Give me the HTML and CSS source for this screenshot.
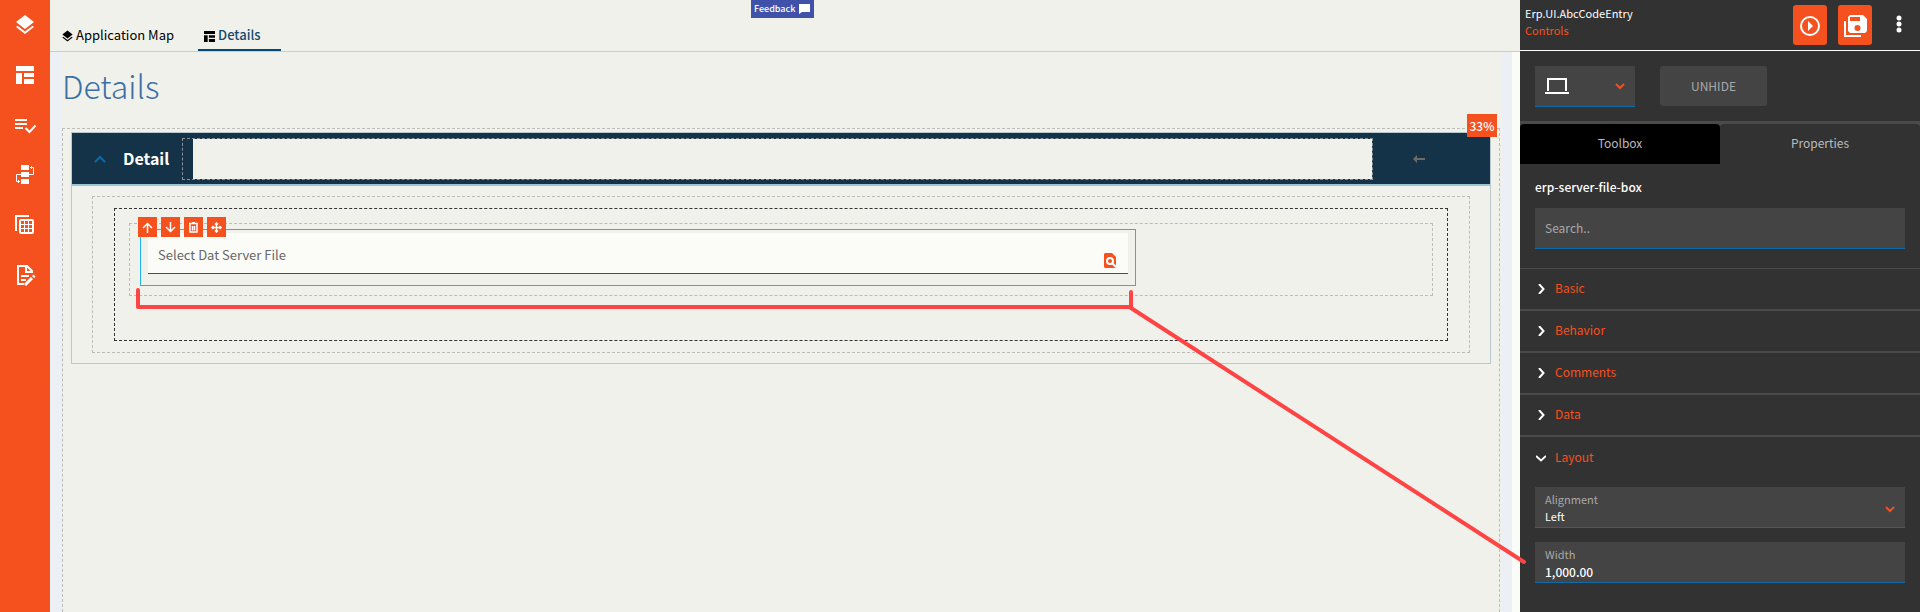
FILE: index.html
```html
<!DOCTYPE html>
<html lang="en">
<head>
  <meta charset="UTF-8">
  <meta name="viewport" content="width=device-width, initial-scale=1.0">
  <title>Erp.UI.AbcCodeEntry</title>
  <link rel="stylesheet" href="styles.css">
</head>
<body>
  <div class="app">
    <nav class="sidebar">
      <button aria-label="Layers">
        <svg width="24" height="24" viewBox="0 0 24 24" fill="#fff"><path d="M12 18.5L4.6 12.8 3 14l9 7 9-7-1.6-1.2zM12 16l7.4-5.7L21 9l-9-7-9 7 1.6 1.3z"/></svg>
      </button>
      <button aria-label="Page layout">
        <svg width="24" height="24" viewBox="0 0 24 24" fill="#fff"><path d="M3 3h18v5H3zM3 10h6v11H3zM11 10h10v4H11zM11 16h10v5H11z"/></svg>
      </button>
      <button aria-label="Rules">
        <svg width="24" height="24" viewBox="0 0 24 24" fill="#fff"><path d="M2 6h12v2H2zM2 10h12v2H2zM2 14h8v2H2z"/><path d="M12.500 15l4 4 6-6.500" fill="none" stroke="#fff" stroke-width="2"/></svg>
      </button>
      <button aria-label="Events">
        <svg width="24" height="24" viewBox="0 0 24 24" fill="#fff"><path d="M8 2h8v5H8zM8 9h8v5H8zM8 16h8v5H8z"/><path d="M8 11.500H3.500v7H7M5.500 17v3M16 11.500h4.500v-7H17M18.500 3v3" fill="none" stroke="#fff"/></svg>
      </button>
      <button aria-label="Data views">
        <svg width="24" height="24" viewBox="0 0 24 24" fill="none" stroke="#fff"><path d="M16 3H3v15" stroke-width="2"/><rect x="7" y="7" width="13" height="13" rx="1" stroke-width="2"/><path d="M7 11.500h13M7 15.500h13M11.500 7v13M15.500 7v13"/></svg>
      </button>
      <button aria-label="Edit document">
        <svg width="24" height="24" viewBox="0 0 24 24" fill="none" stroke="#fff" stroke-width="2"><path d="M11 21H5V3h9l5 5v2"/><path d="M13 3v6h6M8 13h8M8 17h5"/><path d="M12 22l7-7" stroke-width="3"/><path d="M20 14l1.500-1.500" stroke-width="3"/></svg>
      </button>
    </nav>

    <main class="main">
      <header class="tabs">
        <a class="tab" href="#map">
          <svg width="11" height="12" viewBox="3 1 18 21"><path d="M12 18.500L4.600 12.800 3 14l9 7 9-7-1.600-1.200zM12 16l9-7-9-7-9 7z"/></svg>Application Map</a>
        <a class="tab active" href="#details">
          <svg width="11" height="11" viewBox="3 3 18 18"><path d="M3 3h18v5H3zM3 10h6v11H3zM11 10h10v4H11zM11 16h10v5H11z"/></svg>Details</a>
        <button class="feedback">Feedback
          <svg width="12" height="12" viewBox="0 0 12 12" fill="#fff"><path d="M0 1h11v8H3l-3 2z"/></svg>
        </button>
      </header>

      <div class="workspace">
        <section class="page">
          <h1>Details</h1>
          <div class="drop-zone">
            <span class="badge">33%</span>
            <section class="panel">
              <div class="panel-header">
                <button class="collapse" aria-label="Collapse">
                  <svg width="12" height="8" viewBox="0 0 12 8" fill="none" stroke="#0f6ba8" stroke-width="2"><path d="M1 7l5-5 5 5"/></svg>
                </button>
                <h2>Detail</h2>
                <div class="toolbar-slot"><div class="slot-fill"></div></div>
                <button class="back" aria-label="Back">
                  <svg width="12" height="8" viewBox="0 0 12 8"><path d="M0 4l4-4v8zM3 3h9v2H3z" fill="#6e6a68"/></svg>
                </button>
              </div>
              <div class="panel-body">
                <div class="box outer">
                  <div class="box row">
                    <div class="box column">
                      <div class="control">
                        <div class="actions">
                          <button aria-label="Move up"><svg width="11" height="11" viewBox="0 0 11 11"><path d="M5.500 11V2M1 6l4.500-4.500L10 6"/></svg></button>
                          <button aria-label="Move down"><svg width="11" height="11" viewBox="0 0 11 11"><path d="M5.500 0v9M1 5l4.500 4.500L10 5"/></svg></button>
                          <button aria-label="Delete"><svg width="11" height="11" viewBox="0 0 11 11"><path d="M1 1.500h9M2 2v8h7V2M4.500 4v4.500M6.500 4v4.500M4 .5h3"/></svg></button>
                          <button aria-label="Move"><svg width="11" height="11" viewBox="0 0 11 11"><path d="M5.500 1v9M1 5.500h9M4 2.500l1.500-1.500 1.500 1.500M4 8.500l1.500 1.500 1.500-1.500M2.500 4L1 5.500 2.500 7M8.500 4L10 5.500 8.500 7"/></svg></button>
                        </div>
                        <div class="file-field">
                          <input type="text" placeholder="Select Dat Server File" aria-label="Select Dat Server File">
                          <button aria-label="Browse files">
                            <svg width="13" height="15" viewBox="0 0 13 15"><path d="M1 0h7l4 4v10l-1 1H1l-1-1V1z" fill="#f4511e"/><circle cx="6" cy="8" r="3" fill="none" stroke="#fff" stroke-width="2"/><path d="M8 10l4 4" stroke="#fff" stroke-width="2"/></svg>
                          </button>
                        </div>
                      </div>
                    </div>
                  </div>
                </div>
              </div>
            </section>
          </div>
        </section>
      </div>
    </main>

    <aside class="inspector">
      <header class="inspector-header">
        <div class="names">
          <strong>Erp.UI.AbcCodeEntry</strong>
          <span>Controls</span>
        </div>
        <button class="action" aria-label="Preview">
          <svg width="24" height="24" viewBox="0 0 24 24"><circle cx="12" cy="13" r="9" fill="none" stroke="#fff" stroke-width="2"/><path d="M10 8v10l5-5z" fill="#fff"/></svg>
        </button>
        <button class="action" aria-label="Save">
          <svg width="24" height="24" viewBox="0 0 24 24"><path d="M2 8v15h16" fill="none" stroke="#fff" stroke-width="2"/><path fill="#fff" fill-rule="evenodd" d="M7 2h13l4 4v12l-2 2H7l-2-2V4zM7 4v4h10V4zM14.500 12a3 3 0 1 0 0 6 3 3 0 1 0 0-6z"/></svg>
        </button>
        <button class="more" aria-label="More">
          <svg width="6" height="18" viewBox="0 0 6 18" fill="#fff"><circle cx="3" cy="3" r="2.500"/><circle cx="3" cy="9" r="2.500"/><circle cx="3" cy="15" r="2.500"/></svg>
        </button>
      </header>

      <div class="device-bar">
        <button class="device" aria-label="Device">
          <svg width="24" height="16" viewBox="0 0 24 16"><path d="M3 13V1h18v12" fill="none" stroke="#fff" stroke-width="2"/><path d="M0 14h24v2H0z" fill="#fff"/></svg>
          <svg class="arrow" width="10" height="7" viewBox="0 0 10 7"><path d="M1 1l4 4 4-4"/></svg>
        </button>
        <button class="unhide">UNHIDE</button>
      </div>

      <div class="inspector-tabs">
        <button class="active">Toolbox</button>
        <button>Properties</button>
      </div>

      <div class="search">
        <label for="search">erp-server-file-box</label>
        <input type="text" id="search" placeholder="Search..">
      </div>

      <div class="groups">
        <button class="group"><svg width="10" height="10" viewBox="0 0 10 10"><path d="M3 0l4.500 5L3 10"/></svg>Basic</button>
        <button class="group"><svg width="10" height="10" viewBox="0 0 10 10"><path d="M3 0l4.500 5L3 10"/></svg>Behavior</button>
        <button class="group"><svg width="10" height="10" viewBox="0 0 10 10"><path d="M3 0l4.500 5L3 10"/></svg>Comments</button>
        <button class="group"><svg width="10" height="10" viewBox="0 0 10 10"><path d="M3 0l4.500 5L3 10"/></svg>Data</button>
        <button class="group"><svg width="10" height="10" viewBox="0 0 10 10"><path d="M0 3l5 4.500L10 3"/></svg>Layout</button>
      </div>

      <div class="fields">
        <div class="field">
          <label for="alignment">Alignment</label>
          <select id="alignment">
            <option>Left</option>
            <option>Center</option>
            <option>Right</option>
          </select>
          <svg class="arrow" width="10" height="7" viewBox="0 0 10 7"><path d="M1 1l4 4 4-4"/></svg>
        </div>
        <div class="field">
          <label for="width">Width</label>
          <input type="text" id="width" class="number" value="1,000.00">
        </div>
      </div>
    </aside>

    <!-- Red line from the control to the Width field -->
    <svg class="callout" width="1920" height="612" viewBox="0 0 1920 612">
      <path d="M138 290v17h993v-15M1131 308l393 254"/>
    </svg>
  </div>
</body>
</html>
```
FILE: styles.css
```css
* {
  box-sizing: border-box;
}
body {
  margin: 0;
  background: #f1f1ec;
  color: #000;
  font-family: "Noto Sans CJK SC", "Open Sans", sans-serif;
  font-size: 13px;
  line-height: 20px;
}
button, input, select {
  font: inherit;
  color: inherit;
  margin: 0;
  padding: 0;
  border: none;
  border-radius: 0;
  background: none;
  outline: none;
}
button {
  cursor: pointer;
}
svg {
  display: block;
}
.app {
  display: flex;
  position: relative;
  height: 100vh;
  overflow: hidden;
}

/* Sidebar */
.sidebar {
  display: flex;
  flex-direction: column;
  width: 50px;
  background: #f4511e;
}
.sidebar button {
  display: grid;
  place-items: center;
  height: 50px;
}

/* Main area */
.main {
  display: flex;
  flex-direction: column;
  flex: 1;
  min-width: 0;
}
.tabs {
  display: flex;
  position: relative;
  align-items: flex-end;
  height: 52px;
  gap: 16px;
  padding-left: 4px;
  border-bottom: 1px solid #ccc;
}
.tab {
  display: flex;
  align-items: center;
  gap: 3px;
  height: 32px;
  padding: 2px 8px 0;
  color: #000;
  text-decoration: none;
  border-bottom: 2px solid transparent;
}
.tab.active {
  padding: 2px 20px 0 6px;
  color: #134a6e;
  font-weight: 500;
  border-color: #004a73;
}
.tab svg {
  margin-top: 2px;
}
.feedback {
  display: flex;
  position: absolute;
  top: 0;
  left: 701px;
  align-items: center;
  gap: 4px;
  width: 63px;
  height: 18px;
  padding-left: 3px;
  background: #3f51a8;
  color: #fff;
  font-size: 9px;
  font-weight: 500;
}
.workspace {
  flex: 1;
  min-height: 0;
  padding: 0 10px 0 11px;
  background: #ecf0f4;
  border-right: 8px solid #fbfcf7;
}
.page {
  display: flex;
  flex-direction: column;
  height: 100%;
  padding: 10px 2px 0 1px;
  background: #f1f1ec;
}
h1 {
  margin: 0 0 20px;
  color: #3c6fa5;
  font-size: 32px;
  font-weight: 300;
  line-height: 46px;
}
.drop-zone {
  position: relative;
  flex: 1;
  padding: 3px 8px;
  border: 1px dashed #bcbcb8;
  border-bottom: none;
}
.badge {
  position: absolute;
  top: -15px;
  right: 2px;
  width: 30px;
  height: 23px;
  background: #f4511e;
  color: #fff;
  font-size: 12px;
  font-weight: 500;
  text-align: center;
  line-height: 23px;
}
.panel {
  border: 1px solid #b9c8cc;
}
.panel-header {
  display: flex;
  align-items: center;
  height: 53px;
  background: #143349;
  border-bottom: 2px solid #9cc4d4;
}
.collapse {
  display: grid;
  place-items: center;
  width: 12px;
  margin: 0 17px 0 22px;
}
h2 {
  margin: 0;
  width: 59px;
  padding-bottom: 2px;
  color: #fff;
  font-size: 16px;
  font-weight: 700;
}
.toolbar-slot {
  flex: 1;
  height: 42px;
  padding-left: 10px;
  border: 1px dashed #8a9297;
}
.slot-fill {
  height: 100%;
  background: #f1f1ec;
}
.back {
  margin: 0 65px 0 40px;
}
.panel-body {
  padding: 10px 20px;
}
.box {
  border: 1px dashed #bcbcb8;
}
.outer {
  padding: 11px 21px;
}
.row {
  padding: 14px 14px 44px;
  border-color: #333;
}
.column {
  padding: 5px 10px 9px;
}
.control {
  position: relative;
  width: 996px;
  max-width: 100%;
  padding: 3px 7px 11px;
  border: 1px solid #1fb6e8;
}
.actions {
  display: flex;
  position: absolute;
  top: -13px;
  left: -3px;
  gap: 4px;
}
.actions button {
  display: grid;
  place-items: center;
  width: 19px;
  height: 20px;
  background: #f4511e;
}
.actions svg {
  fill: none;
  stroke: #fff;
  stroke-width: 1.5;
}
.file-field {
  display: flex;
  align-items: center;
  height: 41px;
  padding: 0 11px 0 10px;
  background: #fbfcf7;
  border-bottom: 1px solid #0f5f8c;
}
.file-field input {
  flex: 1;
  height: 40px;
  padding-top: 2px;
}
.file-field input::placeholder {
  color: #666;
  opacity: 1;
}
.file-field button {
  padding-top: 14px;
}

/* Inspector */
.inspector {
  width: 400px;
  background: #323232;
  color: #fff;
  font-size: 12px;
}
.inspector-header {
  display: flex;
  align-items: flex-start;
  height: 51px;
  padding: 5px 18px 0 5px;
  border-bottom: 1px solid #fff;
}
.names {
  display: flex;
  flex-direction: column;
  flex: 1;
  font-size: 11px;
  line-height: 17px;
}
.names strong {
  font-weight: 400;
}
.names span {
  color: #f4511e;
}
.action {
  display: grid;
  place-items: center;
  width: 34px;
  height: 40px;
  margin-right: 11px;
  background: #f4511e;
  border-radius: 3px;
}
.more {
  margin: 10px 0 0 13px;
}
.device-bar {
  display: flex;
  gap: 25px;
  padding: 15px 15px 14px;
  border-bottom: 3px solid #4a4a4a;
}
.device {
  display: flex;
  align-items: center;
  justify-content: space-between;
  width: 100px;
  height: 41px;
  padding: 0 10px;
  background: #444;
  border-bottom: 1px solid #0f6ba8;
}
.arrow {
  fill: none;
  stroke: #f4511e;
  stroke-width: 2;
}
.unhide {
  width: 107px;
  height: 40px;
  background: #444;
  border-radius: 3px;
  color: #a8a8a8;
}
.inspector-tabs {
  display: flex;
  background: #4a4a4a;
}
.inspector-tabs button {
  flex: 1;
  height: 40px;
  padding-bottom: 2px;
  background: #323232;
  border-radius: 4px 4px 0 0;
  color: #bbb;
}
.inspector-tabs .active {
  background: #000;
}
.search {
  padding: 13px 15px 19px;
}
.search label {
  display: block;
  margin-bottom: 11px;
  font-weight: 500;
}
.search input {
  width: 100%;
  height: 41px;
  padding: 0 10px 2px;
  background: #444;
  border-bottom: 1px solid #0f6ba8;
}
.search input::placeholder {
  color: #a8a8a8;
  opacity: 1;
}
.groups {
  border-top: 1px solid #4a4a4a;
}
.group {
  display: flex;
  align-items: center;
  gap: 9px;
  width: 100%;
  height: 42px;
  padding: 0 0 2px 16px;
  border-bottom: 2px solid #4a4a4a;
  color: #f4511e;
}
.group:last-child {
  border-bottom: none;
}
.group svg {
  margin-top: 2px;
  fill: none;
  stroke: #fff;
  stroke-width: 2;
}
.fields {
  display: flex;
  flex-direction: column;
  gap: 14px;
  padding: 8px 15px;
}
.field {
  position: relative;
  height: 41px;
  padding: 4px 10px 0;
  background: #444;
  border-bottom: 1px solid #0f6ba8;
  font-size: 11px;
  line-height: 16px;
}
.field label {
  display: block;
  color: #a8a8a8;
}
.field input, .field select {
  display: block;
  width: 100%;
  height: 18px;
  appearance: none;
}
.field .number {
  font-size: 12px;
  font-weight: 500;
}
.field option {
  background: #444;
}
.field .arrow {
  position: absolute;
  top: 19px;
  right: 10px;
}

/* Callout */
.callout {
  position: absolute;
  top: 0;
  left: 0;
  fill: none;
  stroke: #ff4444;
  stroke-width: 4;
  stroke-linecap: round;
  stroke-linejoin: round;
  pointer-events: none;
}
```
